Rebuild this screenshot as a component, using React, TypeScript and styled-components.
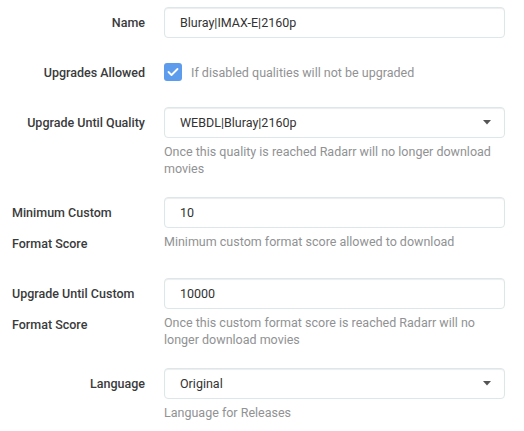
import styled, { createGlobalStyle } from 'styled-components';

const GlobalStyle = createGlobalStyle`
  body {
    margin: 0;
    background: #fff;
    font-family: Roboto, "Open Sans", sans-serif;
    font-size: 12.5px;
    color: #515253;
  }
`;

function CaretDown() {
  return (
    <svg width="8" height="5" viewBox="0 0 8 5" aria-hidden="true">
      <polygon points="0,0 8,0 4,4.5" fill="#555" />
    </svg>
  );
}

function CheckMark() {
  return (
    <svg width="12" height="10" viewBox="0 0 12 10" aria-hidden="true">
      <polyline
        points="1.5,5 4.5,8 10.5,2"
        fill="none"
        stroke="#fff"
        strokeWidth="1.8"
        strokeLinecap="round"
        strokeLinejoin="round"
      />
    </svg>
  );
}

function App() {
  return (
    <>
      <GlobalStyle />
      <Form>
        <FormGroup>
          <Label>Name</Label>
          <InputColumn>
            <TextInput defaultValue="Bluray|IMAX-E|2160p" />
          </InputColumn>
        </FormGroup>

        <FormGroup>
          <Label>Upgrades Allowed</Label>
          <CheckRow>
            <CheckBox>
              <CheckMark />
            </CheckBox>
            <CheckHelp>If disabled qualities will not be upgraded</CheckHelp>
          </CheckRow>
        </FormGroup>

        <FormGroup>
          <Label>Upgrade Until Quality</Label>
          <InputColumn>
            <Select>
              <span>WEBDL|Bluray|2160p</span>
              <CaretDown />
            </Select>
            <HelpText>
              Once this quality is reached Radarr will no longer download
              movies
            </HelpText>
          </InputColumn>
        </FormGroup>

        <FormGroup>
          <Label>Minimum Custom Format Score</Label>
          <InputColumn>
            <TextInput defaultValue="10" />
            <HelpText>Minimum custom format score allowed to download</HelpText>
          </InputColumn>
        </FormGroup>

        <FormGroup>
          <Label>Upgrade Until Custom Format Score</Label>
          <InputColumn>
            <TextInput defaultValue="10000" />
            <HelpText>
              Once this custom format score is reached Radarr will no longer
              download movies
            </HelpText>
          </InputColumn>
        </FormGroup>

        <FormGroup>
          <Label>Language</Label>
          <InputColumn>
            <Select>
              <span>Original</span>
              <CaretDown />
            </Select>
            <HelpText>Language for Releases</HelpText>
          </InputColumn>
        </FormGroup>
      </Form>
    </>
  );
}

export default App;

const Form = styled.div`
  padding: 7px 19px 0 12px;
`;

const FormGroup = styled.div`
  display: flex;
  align-items: flex-start;
  margin-bottom: 19px;
`;

const Label = styled.label`
  display: flex;
  justify-content: flex-end;
  flex: 0 0 133px;
  margin-right: 19px;
  font-weight: 500;
  line-height: 31px;
  color: #3a3b3c;
`;

const InputColumn = styled.div`
  flex: 1;
  min-width: 0;
`;

const TextInput = styled.input`
  display: block;
  box-sizing: border-box;
  width: 100%;
  height: 31px;
  padding: 0 15px;
  border: 1px solid #dde6e9;
  border-radius: 4px;
  box-shadow: inset 0 1px 1px rgba(0, 0, 0, 0.075);
  font-family: inherit;
  font-size: 12.5px;
  color: #333;
  outline: none;
`;

const Select = styled.div`
  box-sizing: border-box;
  display: flex;
  align-items: center;
  justify-content: space-between;
  height: 31px;
  padding: 0 13px 0 15px;
  border: 1px solid #dde6e9;
  border-radius: 4px;
  box-shadow: inset 0 1px 1px rgba(0, 0, 0, 0.075);
  color: #333;
`;

const HelpText = styled.div`
  margin-top: 5px;
  padding-bottom: 1px;
  line-height: 17px;
  color: #909293;
`;

const CheckRow = styled.div`
  display: flex;
  align-items: center;
  height: 30px;
`;

const CheckBox = styled.span`
  display: flex;
  align-items: center;
  justify-content: center;
  width: 18px;
  height: 18px;
  border-radius: 3px;
  background: #5d9cec;
  margin-right: 9px;
`;

const CheckHelp = styled.span`
  color: #909293;
`;
